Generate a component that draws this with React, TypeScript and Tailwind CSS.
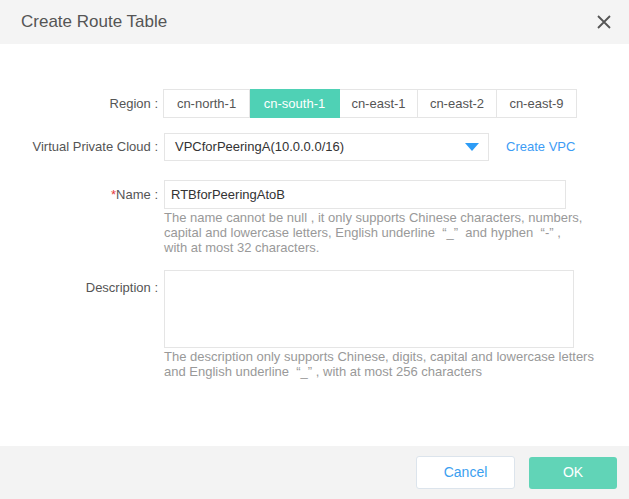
import { useState } from "react";

const REGIONS: { id: string; w: string }[] = [
  { id: "cn-north-1", w: "w-[87px]" },
  { id: "cn-south-1", w: "w-[90px]" },
  { id: "cn-east-1", w: "w-[78px]" },
  { id: "cn-east-2", w: "w-[79px]" },
  { id: "cn-east-9", w: "w-[80px]" },
];

export default function App() {
  const [region, setRegion] = useState("cn-south-1");

  return (
    <div
      className="w-[629px] h-[499px] bg-white flex flex-col text-[13px] text-[#555]"
      style={{ fontFamily: '"Liberation Sans", Arial, sans-serif' }}
    >
      {/* Header */}
      <div className="h-[44px] bg-[#f4f4f4] flex items-center justify-between pl-[21px] pr-[18px]">
        <div className="text-[17px] text-[#555]">Create Route Table</div>
        <button type="button" className="w-[14px] h-[14px] text-[#555]">
          <svg viewBox="0 0 14 14" width="14" height="14">
            <path d="M1 1 L13 13 M13 1 L1 13" stroke="currentColor" strokeWidth="1.8" fill="none" />
          </svg>
        </button>
      </div>

      {/* Body */}
      <div className="flex-1 pt-[45px]">
        {/* Region */}
        <div className="flex items-center h-[29px]">
          <div className="w-[158px] text-right">Region :</div>
          <div className="ml-[5px] flex">
            {REGIONS.map(({ id, w }) => (
              <button
                key={id}
                type="button"
                onClick={() => setRegion(id)}
                className={`${w} h-[29px] flex items-center justify-center border-y border-r first:border-l ${
                  region === id
                    ? "bg-[#4fd1b5] border-[#4fd1b5] text-white"
                    : "bg-white border-[#e5e5e5] text-[#555]"
                }`}
              >
                {id}
              </button>
            ))}
          </div>
        </div>

        {/* VPC */}
        <div className="flex items-center h-[28px] mt-[15px]">
          <div className="w-[158px] text-right">Virtual Private Cloud :</div>
          <div className="ml-[6px] w-[325px] h-[28px] border border-[#e5e5e5] flex items-center justify-between pl-[10px] pr-[9px] text-[#333]">
            <span>VPCforPeeringA(10.0.0.0/16)</span>
            <svg viewBox="0 0 14 8" width="14" height="8">
              <path d="M0 0 L14 0 L7 8 Z" fill="#2d9cf6" />
            </svg>
          </div>
          <a className="ml-[17px] text-[#3d9cf5]">Create VPC</a>
        </div>

        {/* Name */}
        <div className="flex mt-[19px]">
          <div className="w-[158px] text-right h-[29px] flex items-center justify-end">
            <span className="text-[#e4393c]">*</span>Name :
          </div>
          <div className="ml-[6px]">
            <div className="w-[402px] h-[29px] border border-[#e5e5e5] flex items-center pl-[6px] text-[#333]">
              RTBforPeeringAtoB
            </div>
            <div className="mt-[1px] w-[420px] text-[#999] leading-[15px]">
              The name cannot be null , it only supports Chinese characters, numbers, capital and
              lowercase letters, English underline {"\u00a0\u201c_\u201d\u00a0"} and hyphen{" "}
              {"\u00a0\u201c-\u201d\u00a0"}, with at most 32 characters.
            </div>
          </div>
        </div>

        {/* Description */}
        <div className="flex mt-[15px]">
          <div className="w-[158px] text-right pt-[8px]">Description :</div>
          <div className="ml-[6px]">
            <div className="w-[410px] h-[78px] border border-[#e5e5e5]" />
            <div className="mt-[1px] w-[430px] text-[#999] leading-[15px]">
              The description only supports Chinese, digits, capital and lowercase letters and
              English underline {"\u00a0\u201c_\u201d\u00a0"}, with at most 256 characters
            </div>
          </div>
        </div>
      </div>

      {/* Footer */}
      <div className="h-[53px] bg-[#f3f3f3] flex items-center justify-end pr-[12px]">
        <button
          type="button"
          className="w-[99px] h-[33px] bg-white border border-[#dce4ec] rounded-[3px] text-[14px] text-[#3ba0f0]"
        >
          Cancel
        </button>
        <button
          type="button"
          className="ml-[14px] w-[88px] h-[32px] bg-[#61d4b7] rounded-[3px] text-[14px] text-white"
        >
          OK
        </button>
      </div>
    </div>
  );
}
